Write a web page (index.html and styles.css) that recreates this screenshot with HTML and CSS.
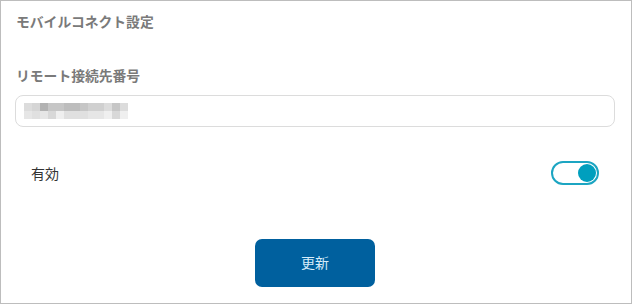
FILE: index.html
```html
<!DOCTYPE html>
<html lang="ja">
<head>
<meta charset="utf-8">
<link rel="stylesheet" href="styles.css">
</head>
<body>
<div class="panel">
  <h1 class="title">モバイルコネクト設定</h1>
  <label class="label">リモート接続先番号</label>
  <div class="input">
    <div class="mosaic">
      <span class="g3"></span><span class="g4"></span><span class="g1"></span><span class="g2"></span><span class="g2"></span><span class="g1b"></span><span class="g1b"></span><span class="g2"></span><span class="g3b"></span><span class="g3b"></span><span class="g3"></span><span class="g2"></span><span class="g3"></span>
      <span class="l2"></span><span class="l3"></span><span class="l2"></span><span class="l4"></span><span class="l1"></span><span class="l3"></span><span class="l3"></span><span class="l3"></span><span class="l2"></span><span class="l2"></span><span class="l1"></span><span class="l4"></span><span class="l1"></span>
    </div>
  </div>
  <div class="row">
    <span class="row-label">有効</span>
    <span class="toggle"><span class="knob"></span></span>
  </div>
  <div class="actions">
    <button class="btn">更新</button>
  </div>
</div>
</body>
</html>
```
FILE: styles.css
```css
html, body {
  margin: 0;
  padding: 0;
  background: #fff;
}
body {
  font-family: "Noto Sans CJK JP", "Noto Sans", sans-serif;
}
.panel {
  box-sizing: border-box;
  width: 632px;
  height: 304px;
  border: 1px solid #bdbdbd;
  padding: 10px 16px 0 14px;
}
.title {
  margin: 0;
  font-size: 13.8px;
  line-height: 20px;
  font-weight: 700;
  color: #7a7a7a;
  padding-left: 1px;
}
.label {
  display: block;
  margin-top: 34px;
  font-size: 13.8px;
  line-height: 20px;
  font-weight: 700;
  color: #7a7a7a;
  padding-left: 1px;
}
.input {
  box-sizing: border-box;
  margin-top: 10px;
  width: 600px;
  height: 32px;
  border: 1px solid #dcdcdc;
  border-radius: 8px;
  padding: 7px 0 0 8px;
}
.mosaic {
  display: grid;
  grid-template-columns: repeat(13, 8px);
  grid-auto-rows: 8px;
}
.mosaic span { display: block; }
.g1 { background: #b2b2b2; }
.g1b { background: #bdbdbd; }
.g2 { background: #c6c6c6; }
.g3 { background: #dcdcdc; }
.g3b { background: #d0d0d0; }
.g4 { background: #d5d5d5; }
.l1 { background: #efefef; }
.l2 { background: #e6e6e6; }
.l3 { background: #e0e0e0; }
.l4 { background: #d8d8d8; }
.row {
  display: flex;
  align-items: center;
  justify-content: space-between;
  width: 600px;
  box-sizing: border-box;
  height: 40px;
  margin-top: 26px;
  padding: 0 16px 0 16px;
}
.row-label {
  font-size: 14px;
  color: #333;
}
.toggle {
  box-sizing: border-box;
  width: 48px;
  height: 24px;
  border: 2px solid #1ca5c2;
  border-radius: 12px;
  display: flex;
  align-items: center;
  justify-content: flex-end;
  padding-right: 1px;
}
.knob {
  width: 18px;
  height: 18px;
  border-radius: 50%;
  background: #009fbe;
}
.actions {
  width: 600px;
  display: flex;
  justify-content: center;
  margin-top: 46px;
}
.btn {
  width: 120px;
  height: 48px;
  border: none;
  border-radius: 7px;
  background: #00609e;
  color: #d6ecfa;
  font-family: "Noto Sans CJK JP", "Noto Sans", sans-serif;
  font-size: 14px;
  line-height: 20px;
  padding: 0 0 3px 0;
}
```
